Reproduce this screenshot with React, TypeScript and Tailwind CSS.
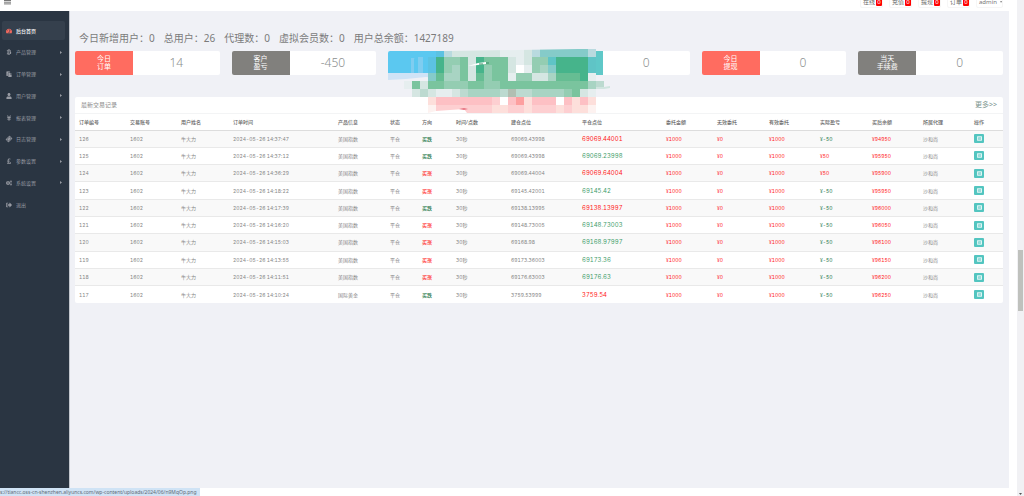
import type { IconType } from "react-icons";
import {
  FaBtc,
  FaCogs,
  FaListAlt,
  FaPaste,
  FaPoundSign,
  FaSignOutAlt,
  FaTachometerAlt,
  FaTicketAlt,
  FaUser,
  FaYenSign,
} from "react-icons/fa";

interface MenuItem {
  label: string;
  icon: IconType;
  active?: boolean;
  leaf?: boolean;
  tilt?: boolean;
}

const MENU: MenuItem[] = [
  { label: "后台首页", icon: FaTachometerAlt, active: true, leaf: true },
  { label: "产品管理", icon: FaBtc },
  { label: "订单管理", icon: FaPaste },
  { label: "用户管理", icon: FaUser },
  { label: "报表管理", icon: FaYenSign },
  { label: "日志管理", icon: FaTicketAlt, tilt: true },
  { label: "参数设置", icon: FaPoundSign },
  { label: "系统设置", icon: FaCogs },
  { label: "退出", icon: FaSignOutAlt, leaf: true },
];

const ALERTS = ["在线", "充值", "提现", "订单"];

const SUMMARY = [
  ["今日新增用户", "0"],
  ["总用户", "26"],
  ["代理数", "0"],
  ["虚拟会员数", "0"],
  ["用户总余额", "1427189"],
];

const CARDS = [
  { lines: ["今日", "订单"], value: "14", color: "bg-[#ff6c60]" },
  { lines: ["客户", "盈亏"], value: "-450", color: "bg-[#81807d]" },
  { lines: ["今日"], value: "", color: "bg-[#5bc8f0]" },
  { lines: [], value: "0", color: "bg-[#5fc8c8]" },
  { lines: ["今日", "提现"], value: "0", color: "bg-[#ff6c60]" },
  { lines: ["当天", "手续费"], value: "0", color: "bg-[#81807d]" },
];

// column title and its share of the table width
const COLUMNS: [string, number][] = [
  ["订单编号", 51],
  ["交易账号", 51],
  ["用户姓名", 52],
  ["订单时间", 105],
  ["产品信息", 52],
  ["状态", 32],
  ["方向", 34],
  ["时间/点数", 55],
  ["建仓点位", 71],
  ["平仓点位", 84],
  ["委托金额", 51],
  ["无效委托", 52],
  ["有效委托", 51],
  ["实际盈亏", 52],
  ["买后余额", 51],
  ["所属代理", 51],
  ["操作", 33],
];
const TOTAL = COLUMNS.reduce((sum, c) => sum + c[1], 0);

interface Order {
  id: number;
  time: string;
  product: string;
  up: boolean;
  open: string;
  close: string;
  closeRed: boolean;
  profit: number;
  balance: number;
}

const ORDERS: Order[] = [
  { id: 126, time: "14:37:47", product: "美国指数", up: false, open: "69069.43998", close: "69069.44001", closeRed: true, profit: -50, balance: 94950 },
  { id: 125, time: "14:37:12", product: "美国指数", up: false, open: "69069.43998", close: "69069.23998", closeRed: false, profit: 50, balance: 95950 },
  { id: 124, time: "14:36:29", product: "美国指数", up: true, open: "69069.44004", close: "69069.64004", closeRed: true, profit: 50, balance: 95900 },
  { id: 123, time: "14:18:22", product: "美国指数", up: true, open: "69145.42001", close: "69145.42", closeRed: false, profit: -50, balance: 95950 },
  { id: 122, time: "14:17:39", product: "美国指数", up: false, open: "69138.13995", close: "69138.13997", closeRed: true, profit: -50, balance: 96000 },
  { id: 121, time: "14:16:20", product: "美国指数", up: true, open: "69148.73005", close: "69148.73003", closeRed: false, profit: -50, balance: 96050 },
  { id: 120, time: "14:15:03", product: "美国指数", up: true, open: "69168.98", close: "69168.97997", closeRed: false, profit: -50, balance: 96100 },
  { id: 119, time: "14:13:55", product: "美国指数", up: true, open: "69173.36003", close: "69173.36", closeRed: false, profit: -50, balance: 96150 },
  { id: 118, time: "14:11:51", product: "美国指数", up: true, open: "69176.63003", close: "69176.63", closeRed: false, profit: -50, balance: 96200 },
  { id: 117, time: "14:10:24", product: "国际黄金", up: false, open: "3759.53999", close: "3759.54", closeRed: true, profit: -50, balance: 96250 },
];

const PALETTE: Record<string, string> = {
  G: "#46b48b",
  g: "#66bd93",
  h: "#7ac49e",
  m: "#94cdb2",
  l: "#a8d4c3",
  k: "#bcdad0",
  p: "#d5e6e2",
  q: "#e6eeef",
  w: "#ffffff",
  t: "#5fc4c6",
  T: "#85cbc9",
  b: "#5cc2e2",
  B: "#b9dadf",
  s: "#b1bfb2",
  r: "#fdc0c4",
  R: "#fd9f9f",
  o: "#fdcfd1",
  y: "#fddfdb",
  z: "#fdf2f0",
};

// one letter per 8px cell, a dot is an empty cell
const MOSAIC = [
  "....bBppppppqqqpBTTTTTTB..",
  "...bGmmhpGhhhpqpmmtGGGGt..",
  "...bGmlhpGmhhpwqmlTGGGGt..",
  "...TgllhpgmhhqmmpplgggGq..",
  "qhphhmmmhhmmhhhhhhhhhhhlk.",
  ".pkpqqpkllllkskkllllmhpq..",
  "...yrrrrrrrowrRyrrrwryry..",
  "...zoooooooyyooyoooyoyyz..",
];

function Mosaic() {
  return (
    <svg
      className="pointer-events-none absolute left-[313px] -top-[2px] h-[64px] w-[226px]"
      viewBox="0 0 226 64"
      aria-hidden="true"
    >
      <path d="M0 24h50v5l-12-1-20 2-18 1z" fill="#cfe3f6" />
      <path d="M22 10h16v13h-16z" fill="#5bc8f0" />
      <path d="M23 9h3v15h-3zM30 8h5v16h-5z" fill="#7fcdf0" />
      {MOSAIC.map((row, y) =>
        row.split("").map((cell, x) =>
          cell === "." ? null : (
            <rect key={`${x}-${y}`} x={16 + x * 8} y={y * 8} width="8" height="8" fill={PALETTE[cell]} />
          )
        )
      )}
      <path d="M40 0h150l-60 1-70 1H40z" fill="#f0f1f6" />
      <path d="M208 38h8l6-1v2l-6 1h-8z" fill="#d0e4df" />
      <path d="M80 17l10-3 8-1v2l-8 1z" fill="#fff" />
      <path d="M91 15h4M98 14h3" stroke="#3c8f67" strokeWidth="1" />
      <path d="M40 64l8-2 28-2 3 4z" fill="#fff" />
      <path d="M71 60l5-1 4 1-4 1z" fill="#e87482" />
    </svg>
  );
}

function Sidebar() {
  return (
    <aside className="w-[70px] shrink-0 border-r border-[#c3c7ce] bg-[#2a3542] pt-[10px]">
      <nav className="flex h-[193px] flex-col justify-between pl-[2px] pr-[4px]">
        {MENU.map(({ label, icon: Icon, active, leaf, tilt }) => (
          <a
            key={label}
            href="#"
            className={`flex h-[19px] items-center gap-[4px] rounded-[2px] pl-[4px] pr-[3px] ${
              active ? "bg-[#35404d] font-medium text-white" : "text-[#989ba3]"
            }`}
          >
            <Icon className={`h-[6px] w-auto ${active ? "text-[#ff6c60]" : ""} ${tilt ? "-rotate-45" : ""}`} />
            <span>{label}</span>
            {!leaf && (
              <svg className="ml-auto h-[3px] w-[2px]" viewBox="0 0 2 3" fill="currentColor">
                <path d="M0 0l2 1.5L0 3z" />
              </svg>
            )}
          </a>
        ))}
      </nav>
    </aside>
  );
}

function TopBar() {
  return (
    <header className="flex h-[11px] shrink-0 items-end justify-between overflow-hidden bg-white pb-[3px] pl-[4px] pr-[14px]">
      <button aria-label="菜单" className="self-start">
        <svg className="h-[5px] w-[7px]" viewBox="0 0 7 5" stroke="#777" strokeWidth="1">
          <path d="M0 .5h7M0 2.2h7M0 3.9h7" />
        </svg>
      </button>
      <div className="flex gap-[6px] text-[6px] text-[#666]">
        {ALERTS.map((name) => (
          <button key={name} className="flex h-[12px] w-[23px] items-center rounded-[2px] border border-[#f6f6f6] pl-[2px]">
            {name}
            <span className="ml-px h-[8px] w-[6px] rounded-[1px] bg-[#ff0000] text-center leading-[8px] text-white">0</span>
          </button>
        ))}
        <button className="flex h-[12px] w-[27px] items-center gap-[3px] rounded-[2px] border border-[#f6f6f6] pl-[2px] text-[#777]">
          admin
          <svg className="h-[2px] w-[3px]" viewBox="0 0 3 2" fill="currentColor">
            <path d="M0 0h3L1.5 2z" />
          </svg>
        </button>
      </div>
    </header>
  );
}

function OrderTable() {
  return (
    <section className="mt-[22px] rounded-[2px] bg-white">
      <div className="flex h-[17px] items-center justify-between border-b border-[#f3f4f5] px-[6px] text-[6px] text-[#8a8a8a]">
        <h2>最新交易记录</h2>
        <a href="#" className="text-[7px] text-[#7d9590]">更多&gt;&gt;</a>
      </div>
      <table className="h-[189px] w-full table-fixed text-left">
        <colgroup>
          {COLUMNS.map(([name, width]) => (
            <col key={name} style={{ width: `${(width / TOTAL) * 100}%` }} />
          ))}
        </colgroup>
        <thead>
          <tr className="h-[16px] border-b border-[#dddddd] text-[#666]">
            {COLUMNS.map(([name]) => (
              <th key={name} className="whitespace-nowrap pl-[4px] font-medium">{name}</th>
            ))}
          </tr>
        </thead>
        <tbody className="font-['Inter','Noto_Sans_CJK_SC',sans-serif] tabular-nums text-[#858585] [&_td]:whitespace-nowrap [&_td]:pl-[4px]">
          {ORDERS.map((o) => (
            <tr key={o.id} className="h-[17px] border-t border-[#e9e9e9] odd:bg-[#f9f9f9]">
              <td>{o.id}</td>
              <td>1602</td>
              <td>牛大力</td>
              <td>2024-05-26 {o.time}</td>
              <td>{o.product}</td>
              <td>平仓</td>
              <td className={o.up ? "font-medium text-[#ff3030]" : "font-medium text-[#1f7a4a]"}>{o.up ? "买涨" : "买跌"}</td>
              <td>30秒</td>
              <td>{o.open}</td>
              <td className={`text-[6px] ${o.closeRed ? "text-[#ff2020]" : "text-[#3f9e6c]"}`}>{o.close}</td>
              <td className="text-[#ff2020]">¥1000</td>
              <td className="text-[#ff2020]">¥0</td>
              <td className="text-[#ff2020]">¥1000</td>
              <td className={o.profit > 0 ? "text-[#ff2020]" : "text-[#1f7a4a]"}>¥{o.profit}</td>
              <td className="text-[#ff2020]">¥{o.balance}</td>
              <td>沙和尚</td>
              <td>
                <button aria-label="详情" className="flex h-[9px] w-[10px] items-center justify-center rounded-[1px] bg-[#53c5c0] text-[#e3f6f5]">
                  <FaListAlt className="size-[5px]" />
                </button>
              </td>
            </tr>
          ))}
        </tbody>
      </table>
    </section>
  );
}

export default function App() {
  return (
    <div className="flex h-screen bg-white font-['Noto_Sans','Noto_Sans_CJK_SC',sans-serif] text-[5px] leading-[8px]">
      <div className="flex min-w-0 flex-1 flex-col">
        <TopBar />
        <div className="mb-[8px] mr-[8px] flex min-h-0 flex-1">
          <Sidebar />
          <main className="min-w-0 flex-1 bg-[#f0f1f6] pl-[5px] pr-[6px] pt-[20px]">
            {/* Totals */}
            <div className="flex h-[14px] items-center gap-[9px] pl-[4px] text-[10px] text-[#7b7b7b]">
              {SUMMARY.map(([name, value]) => (
                <span key={name}>{name}：{value}</span>
              ))}
            </div>

            {/* Stat cards */}
            <div className="relative mt-[6px]">
              <div className="grid grid-cols-6 gap-[12px]">
                {CARDS.map((card, i) => (
                  <div key={i} className="flex h-[24px] overflow-hidden rounded-[2px] bg-white">
                    <div className={`flex w-2/5 flex-col items-center justify-center text-[7px] text-white ${card.color}`}>
                      {card.lines.map((line) => (
                        <span key={line}>{line}</span>
                      ))}
                    </div>
                    <div className="flex flex-1 items-center justify-center text-[12px] font-light text-[#8c9090]">
                      {card.value}
                    </div>
                  </div>
                ))}
              </div>
              <Mosaic />
            </div>

            <OrderTable />
          </main>
        </div>
      </div>

      {/* Page scrollbar */}
      <div className="flex w-[7px] shrink-0 flex-col items-center justify-between bg-[#f1f1f4] pb-px">
        <div className="mt-[250px] h-[61px] w-[5px] bg-[#bfc1bd]" />
        <svg className="h-[2px] w-[3px]" viewBox="0 0 3 2" fill="#555">
          <path d="M0 0h3L1.5 2z" />
        </svg>
      </div>

      {/* Link preview */}
      <div className="fixed bottom-0 left-0 h-[8px] w-[200px] overflow-hidden whitespace-nowrap bg-[#cfe3f5] text-[#5f6b76]">
        s://tiancc.oss-cn-shenzhen.aliyuncs.com/wp-content/uploads/2024/06/n9MqOp.png
      </div>
    </div>
  );
}
